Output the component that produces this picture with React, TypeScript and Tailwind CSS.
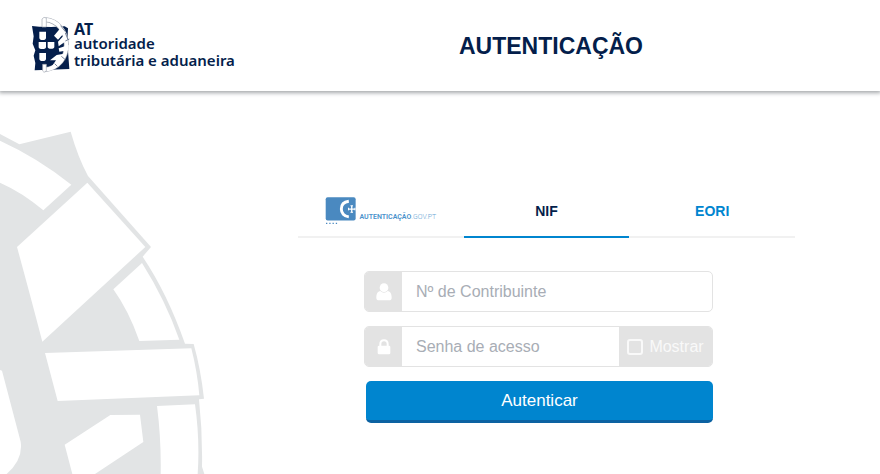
import React, { useState } from "react"

type TabKey = "gov" | "nif" | "eori"

const tabs: { key: TabKey; label: string }[] = [
  { key: "gov", label: "Autenticação.gov.pt" },
  { key: "nif", label: "NIF" },
  { key: "eori", label: "EORI" },
]

function AtEmblem() {
  return (
    <svg viewBox="0 0 138 198" className="h-[66px] w-[46px] shrink-0" aria-hidden="true">
      <path
        d="M12 45L34 47L70 48L110 46L120 52L118 90L120 120L124 174L20 178L22 156L17 134L22 118L14 98L17 76Z"
        fill="#041e4b"
      />
      {/* armillary sphere */}
      <path d="M52 26C88 28 114 60 115 100C116 140 92 172 50 176" fill="none" stroke="#a3a9b3" strokeWidth="15" />
      <path d="M52 26C88 28 114 60 115 100C116 140 92 172 50 176" fill="none" stroke="#fff" strokeWidth="11" />
      <path d="M42 24L48 19L55 21V48H42Z" fill="#fff" stroke="#a3a9b3" strokeWidth="2" />
      <path d="M44 160H55V180L48 184L44 180Z" fill="#fff" stroke="#a3a9b3" strokeWidth="2" />
      <path d="M78 74L102 46L112 62L90 86Z" fill="#fff" />
      <path d="M90 92L112 68L120 86L92 106Z" fill="#fff" />
      <path d="M92 112L122 102V118L94 122Z" fill="#fff" />
      <path d="M66 148L86 132L108 128L106 144L84 166L70 168L84 148Z" fill="#fff" />
      {/* sphere joints */}
      <path d="M98 44L112 62M112 66L120 86M112 90L124 84M100 136L112 146M80 158L88 166" stroke="#5f6c86" strokeWidth="2.5" />
      {/* shields */}
      <g fill="#fff">
        <path d="M34 62H54V80Q54 87 44 87Q34 87 34 80Z" />
        <path d="M32 93H54V108Q54 114 43 114Q32 114 32 108Z" />
        <path d="M59 93H79V107Q79 113 69 113Q59 113 59 107Z" />
        <path d="M34 126H54V143Q54 150 44 150Q34 150 34 143Z" />
      </g>
    </svg>
  )
}

function SphereWatermark() {
  return (
    <svg viewBox="0 0 639 1062" className="w-full" aria-hidden="true">
      <path
        fill="#e2e4e5"
        fillRule="evenodd"
        d="M0 42L58 73L212 35Q234 112 264 168L453 381L428 410Q502 520 555 671L581 672Q602 746 612 836L597 838Q608 940 606 1040L613 1062H0Z
          M0 62Q114 114 214 194L130 271Q68 218 0 188Z
          M262 188L436 381L127 665Q88 516 51 381Z
          M426 429Q496 540 538 659L418 663Q386 572 340 508Z
          M135 699L574 685Q592 756 598 826L173 843Z
          M471 858L585 853Q600 960 593 1062H482Q484 960 471 858Z
          M331 885L420 884L430 966L285 1062H217L194 974Z
          M0 750L6 752L62 965Q70 1018 20 1062H0Z"
      />
    </svg>
  )
}

function GovLogo() {
  return (
    <span className="flex items-end">
      <svg viewBox="0 0 96 86" className="h-7 w-8 shrink-0" aria-hidden="true">
        <rect x="1" y="1" width="92" height="71" rx="6" fill="#4a89c0" />
        <path d="M72 13C56 15 49 25 49 37C49 49 57 59 72 61" fill="none" stroke="#fff" strokeWidth="9" />
        <path d="M81 27V47M71 37H91" stroke="#fff" strokeWidth="4" />
        <path d="M77 27H85M77 47H85M71 33V41M91 33V41" stroke="#fff" strokeWidth="3" />
        <path d="M2 81H6M12 81H16M22 81H26M32 81H36" stroke="#4a89c0" strokeWidth="4" />
      </svg>
      <span className="ml-0.5 pb-1 font-[Roboto,sans-serif] text-[7px] leading-[8px] text-[#4a93cc]">
        <b className="font-semibold">AUTENTICAÇÃO</b>
        <span className="font-light text-[#6aa5d4]">.GOV.PT</span>
      </span>
    </span>
  )
}

function UserIcon() {
  return (
    <svg viewBox="0 0 48 54" className="h-[18px] w-4" fill="#fff" aria-hidden="true">
      <circle cx="24" cy="14" r="13" />
      <path d="M13 24C5 25 1 33 1 44Q1 52 9 52H39Q47 52 47 44C47 33 43 25 35 24Q30 29 24 29Q18 29 13 24Z" />
    </svg>
  )
}

function LockIcon() {
  return (
    <svg viewBox="0 0 42 48" className="h-4 w-3.5" aria-hidden="true">
      <rect x="2" y="20" width="38" height="26" rx="4" fill="#fff" />
      <path d="M10 22V15C10 0 32 0 32 15V22" fill="none" stroke="#fff" strokeWidth="6" />
    </svg>
  )
}

export default function App() {
  const [tab, setTab] = useState<TabKey>("nif")
  const [visible, setVisible] = useState(false)

  return (
    <div className="flex min-h-screen flex-col bg-white font-['Liberation_Sans',Arial,sans-serif]">
      <header className="flex h-[91px] items-center pl-7 shadow-[0_1px_4px_1px_#a5a8ab]">
        <a href="#" className="flex w-[194px] shrink-0 items-center pb-1 text-[#041e4b]">
          <AtEmblem />
          <span className="whitespace-nowrap pt-1 font-['Noto_Sans',sans-serif] text-[15px] font-semibold">
            <span className="block text-base font-bold leading-[13px]">AT</span>
            <span className="block leading-[15px]">autoridade</span>
            <span className="block leading-[18px]">tributária e aduaneira</span>
          </span>
        </a>
        <h1 className="flex-1 pt-0.5 text-center text-[23px] font-bold text-[#041e4b]">AUTENTICAÇÃO</h1>
      </header>

      <main className="flex flex-1">
        <div className="w-[213px] shrink-0 pt-[29px]">
          <SphereWatermark />
        </div>

        <div className="flex flex-1 justify-center pt-[95px]">
          <div className="w-[497px]">
            {/* Tabs */}
            <div role="tablist" className="grid grid-cols-3">
              {tabs.map((t) => (
                <button
                  key={t.key}
                  type="button"
                  role="tab"
                  aria-selected={tab === t.key}
                  aria-label={t.label}
                  onClick={() => setTab(t.key)}
                  className={`flex h-[52px] items-center justify-center border-b-2 text-[14px] font-bold ${
                    tab === t.key ? "border-[#0085cf] text-[#041e4b]" : "border-[#f1f1f1] text-[#0085cf]"
                  }`}
                >
                  {t.key === "gov" ? <GovLogo /> : t.label}
                </button>
              ))}
            </div>

            {/* Login form */}
            <form
              className="ml-[66px] flex w-[349px] flex-col gap-3.5 pt-[33px]"
              onSubmit={(e) => e.preventDefault()}
            >
              <div className="flex h-[41px] overflow-hidden rounded-[5px] border border-[#e3e3e3]">
                <label htmlFor="nif" aria-label="Nº de Contribuinte" className="flex w-[37px] items-center justify-center bg-[#e3e3e3]">
                  <UserIcon />
                </label>
                <input
                  id="nif"
                  type="text"
                  placeholder="Nº de Contribuinte"
                  className="min-w-0 flex-1 px-3.5 text-base outline-none placeholder:text-[#a8adb5]"
                />
              </div>

              <div className="flex h-[41px] overflow-hidden rounded-[5px] border border-[#e3e3e3]">
                <label htmlFor="senha" aria-label="Senha de acesso" className="flex w-[37px] items-center justify-center bg-[#e3e3e3]">
                  <LockIcon />
                </label>
                <input
                  id="senha"
                  type={visible ? "text" : "password"}
                  placeholder="Senha de acesso"
                  className="min-w-0 flex-1 px-3.5 text-base outline-none placeholder:text-[#a8adb5]"
                />
                <label className="flex w-[93px] items-center justify-center gap-1.5 bg-[#e3e3e3] text-base text-[#f9f9f9]">
                  <input
                    type="checkbox"
                    checked={visible}
                    onChange={(e) => setVisible(e.target.checked)}
                    className="h-4 w-4 appearance-none rounded-[3px] border-2 border-[#f9f9f9] checked:bg-[#0085cf]"
                  />
                  Mostrar
                </label>
              </div>

              <button
                type="submit"
                className="ml-0.5 h-[42px] rounded-[5px] border-b-3 border-[#0c62a2] bg-[#0085cf] text-[17px] text-white"
              >
                Autenticar
              </button>
            </form>
          </div>
        </div>
      </main>
    </div>
  )
}
